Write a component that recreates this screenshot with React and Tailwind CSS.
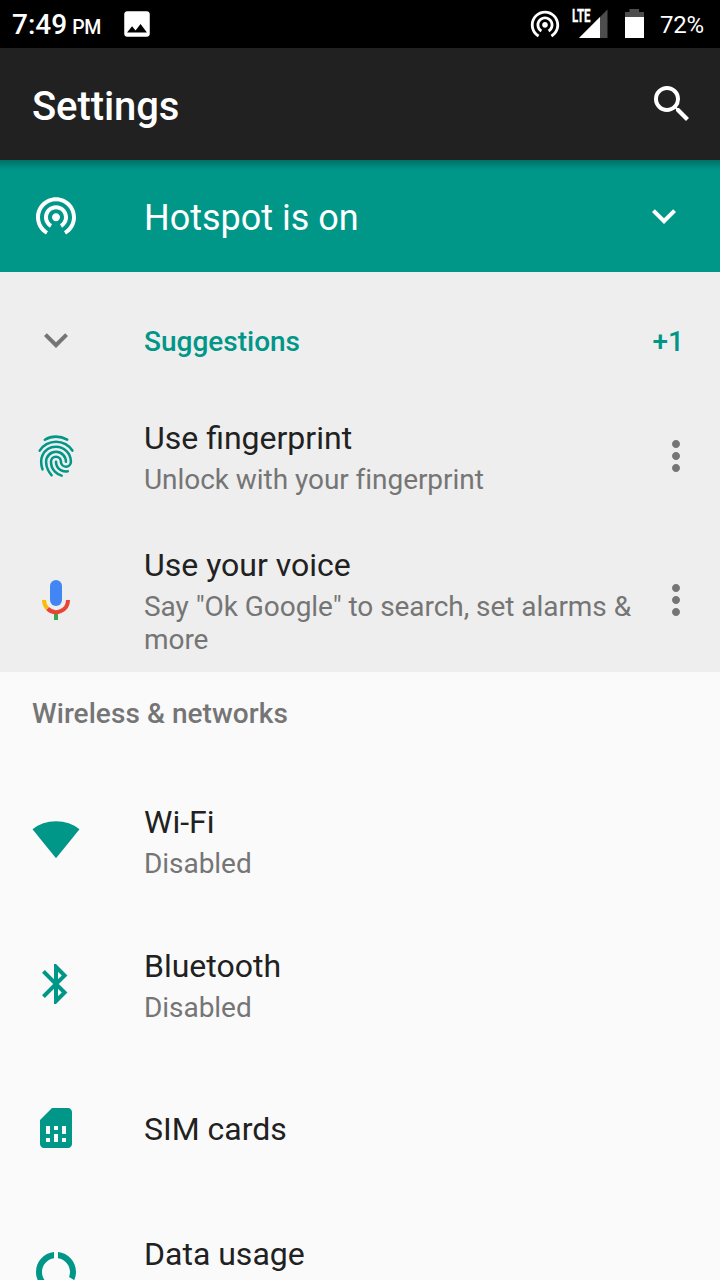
import { MdImage, MdSearch, MdExpandMore, MdMoreVert, MdSimCard, MdDataUsage } from 'react-icons/md';

function TetherIcon({ className }) {
  return (
    <svg viewBox="0 0.35 24 24" fill="currentColor" className={className}>
      <path d="M12 11c-1.1 0-2 .9-2 2s.9 2 2 2 2-.9 2-2-.9-2-2-2zm6 2c0-3.31-2.69-6-6-6s-6 2.69-6 6c0 2.22 1.21 4.15 3 5.19l1-1.74c-1.19-.7-2-1.97-2-3.45 0-2.21 1.79-4 4-4s4 1.79 4 4c0 1.48-.81 2.75-2 3.45l1 1.74c1.79-1.04 3-2.97 3-5.19zM12 3C6.48 3 2 7.48 2 13c0 3.7 2.01 6.92 4.99 8.65l1-1.73C5.61 18.53 4 15.96 4 13c0-4.42 3.58-8 8-8s8 3.58 8 8c0 2.96-1.61 5.53-4 6.92l1 1.73c2.99-1.73 5-4.95 5-8.65 0-5.52-4.48-10-10-10z" />
    </svg>
  );
}

function FingerprintIcon() {
  return (
    <svg viewBox="-49.2 -50.6 32 32" fill="none" stroke="currentColor" strokeWidth="1.7" strokeLinecap="round" className="size-12">
      <path d="M-25.72 -45.45c-2.27 -1.31 -4.71 -2.07 -7.56 -2.07c-2.85 0 -5.23 .78 -7.34 2.07" />
      <path d="M-44.06 -38.17c1.19 -1.77 2.68 -3.25 4.56 -4.27c1.88 -1.03 4.04 -1.61 6.34 -1.61c2.29 0 4.44 .58 6.32 1.6c1.88 1.02 3.36 2.48 4.55 4.24" />
      <path d="M-42.19 -25.68c-.76 -2.14 -.9 -3.87 -.9 -5.13c0 -1.46 .25 -2.85 .81 -4.1c1.56 -3.45 5.03 -5.85 9.07 -5.85c5.49 0 9.95 4.45 9.95 9.95c0 1.83 -1.48 3.32 -3.32 3.32c-1.83 0 -3.32 -1.48 -3.32 -3.32c0 -1.83 -1.48 -3.32 -3.32 -3.32c-1.83 0 -3.32 1.48 -3.32 3.32c0 2.57 .99 4.89 2.61 6.59c1.22 1.29 2.43 2.1 4.48 2.69" />
      <path d="M-36.14 -21.78c-1 -1.19 -1.57 -1.92 -2.37 -3.5c-.83 -1.66 -1.31 -3.49 -1.31 -5.48c0 -3.66 2.97 -6.63 6.63 -6.63c3.66 0 6.63 2.97 6.63 6.63" />
      <path d="M-25.36 -24.41c-.57 .11 -1.13 .14 -1.45 .14c-1.3 0 -2.53 -.34 -3.62 -1.12c-1.68 -1.2 -2.77 -3.17 -2.77 -5.39" />
    </svg>
  );
}

function MicIcon() {
  return (
    <svg viewBox="0 0 48 48" fill="none" strokeWidth="4" className="size-12">
      <rect x="18" y="4" width="12" height="26" rx="6" fill="#4285f4" />
      <path d="M24 37v7" stroke="#34a853" />
      <path d="M36 24a12 12 0 0 1-20.5 8.5" stroke="#ea4335" />
      <path d="M12 24a12 12 0 0 0 3.5 8.5" stroke="#fbbc05" />
    </svg>
  );
}

function WifiIcon() {
  return (
    <svg viewBox="0 0 48 48" fill="currentColor" className="size-12">
      <path d="M24 42.3L.5 13.2C7 8 15 5.2 24 5.2S41 8 47.5 13.2z" />
    </svg>
  );
}

function BluetoothIcon() {
  return (
    <svg viewBox="0 0 24 24" fill="currentColor" className="size-12">
      <path d="M17.71 7.71L12 2h-1v7.59L6.41 5 5 6.41 10.59 12 5 17.59 6.41 19 11 14.41V22h1l5.71-5.71-4.3-4.29 4.3-4.29zM13 5.83l1.88 1.88L13 9.59V5.83zm1.88 10.46L13 18.17v-3.76l1.88 1.88z" />
    </svg>
  );
}

function StatusBar() {
  return (
    <div className="flex h-12 shrink-0 items-center bg-black text-white">
      <div className="flex items-baseline pl-3 pt-0.5 font-medium">
        <span className="text-[28px] leading-none">7:49</span>
        <span className="ml-[5px] text-[19.5px] leading-none tracking-[-0.2px]">PM</span>
      </div>
      <MdImage className="ml-[19px] size-[34px]" />
      <TetherIcon className="ml-auto size-[34px]" />
      <div className="relative ml-[10px] h-[30px] w-9">
        <svg viewBox="0 0 36 30" className="h-[30px] w-9">
          <path d="M35.5 .5V29H7z" fill="#4d4d4d" />
          <path d="M28 8v21H7z" fill="#fff" />
        </svg>
        <span className="absolute left-0 top-0 origin-left scale-x-[0.66] text-[17.5px] font-bold leading-[15px] [-webkit-text-stroke:0.3px_white]">LTE</span>
      </div>
      <svg viewBox="0 0 19 30" className="ml-[17px] h-[30px] w-[19px]">
        <path d="M4.5 0h9.5v3h5v5H0V3h4.5z" fill="#4d4d4d" />
        <path d="M0 8h19v21H0z" fill="#fff" />
      </svg>
      <span className="ml-4 mr-4 pt-0.5 text-[24px] leading-none tracking-[-0.2px]">72%</span>
    </div>
  );
}

function Row({ icon, title, summary, menu }) {
  return (
    <div className="flex h-36 shrink-0 items-center pl-8">
      <div className="w-28 shrink-0 text-[#009688]">{icon}</div>
      <div className="min-w-0 flex-1 pt-0.5">
        <p className="text-[32px] leading-[38px] text-[#212121]">{title}</p>
        {summary && <p className="mt-1.5 text-[28px] leading-[33px] tracking-[-0.05px] text-[#757575]">{summary}</p>}
      </div>
      {menu && <MdMoreVert className="mr-5 size-12 shrink-0 text-[#757575]" />}
    </div>
  );
}

export default function App() {
  return (
    <div className="flex h-[1280px] w-[720px] flex-col overflow-hidden bg-[#fafafa] font-['Roboto',sans-serif]">
      <StatusBar />

      {/* App bar */}
      <header className="flex h-28 shrink-0 items-center justify-between bg-[#212121] pl-8 pr-6 text-white">
        <h1 className="pt-1.5 text-[40px] font-medium leading-[48px] tracking-[-0.1px]">Settings</h1>
        <MdSearch className="size-12" />
      </header>

      {/* Hotspot condition */}
      <div className="flex h-28 shrink-0 items-center bg-[#009688] bg-linear-to-b from-black/25 to-transparent bg-[length:100%_10px] bg-no-repeat px-8 text-white">
        <TetherIcon className="size-12" />
        <span className="ml-16 flex-1 pt-1 text-[36px] leading-[42px]">Hotspot is on</span>
        <MdExpandMore className="size-12" />
      </div>

      {/* Suggestions */}
      <section className="flex shrink-0 flex-col bg-[#eeeeee]">
        <div className="flex h-28 items-center pl-8 pr-9 pt-6 text-[28px] font-medium text-[#009688]">
          <MdExpandMore className="size-12 text-[#757575]" />
          <span className="ml-16 flex-1 pt-1">Suggestions</span>
          <span className="pt-1">+1</span>
        </div>
        <Row icon={<FingerprintIcon />} title="Use fingerprint" summary="Unlock with your fingerprint" menu />
        <Row icon={<MicIcon />} title="Use your voice" summary={'Say "Ok Google" to search, set alarms & more'} menu />
      </section>

      <h2 className="h-24 shrink-0 pl-8 pt-[25px] text-[28px] font-medium leading-[34px] tracking-[0.06px] text-[#757575]">Wireless &amp; networks</h2>
      <Row icon={<WifiIcon />} title="Wi-Fi" summary="Disabled" />
      <Row icon={<BluetoothIcon />} title="Bluetooth" summary="Disabled" />
      <Row icon={<MdSimCard className="size-12" />} title="SIM cards" />
      <Row icon={<MdDataUsage className="size-12" />} title="Data usage" summary={'\u00a0'} />
    </div>
  );
}
